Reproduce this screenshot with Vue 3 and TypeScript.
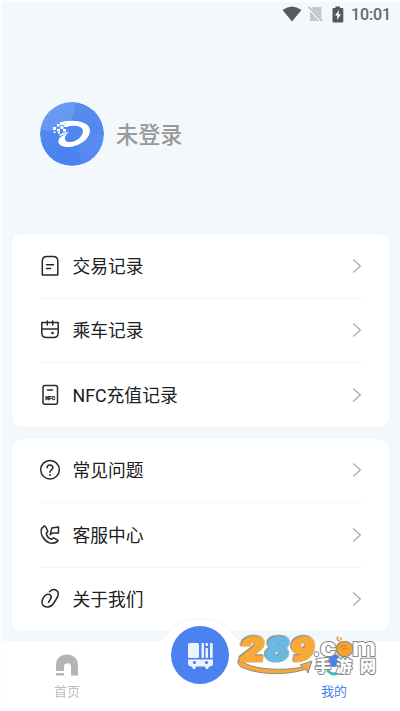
<script setup lang="ts">
interface MenuItem {
  icon: string
  label: string
}

const groups: MenuItem[][] = [
  [
    { icon: 'bill', label: '交易记录' },
    { icon: 'ride', label: '乘车记录' },
    { icon: 'nfc', label: 'NFC充值记录' },
  ],
  [
    { icon: 'help', label: '常见问题' },
    { icon: 'phone', label: '客服中心' },
    { icon: 'about', label: '关于我们' },
  ],
]
</script>

<template>
  <div class="page">
    <header class="status">
      <svg class="wifi" width="20" height="16" viewBox="0 0 20 16"><path d="M.5 4Q10-3 19.500 4L10 15.500Z" fill="#575a5d" /></svg>
      <svg class="sim" width="15" height="16" viewBox="0 0 15 16">
        <path d="M5 1H13.500V15H2V4Z" fill="#c6c9cb" />
        <path d="M0 1L14 15.500" stroke="#f3f8fc" stroke-width="3" />
        <path d="M.5 .8L14.200 15.200" stroke="#a9acae" stroke-width="1.200" />
      </svg>
      <svg class="battery" width="12" height="17" viewBox="0 0 12 17">
        <path d="M3.500 2V.5H8V2H10.500Q11.300 2 11.300 3V15.500Q11.300 16.500 10.500 16.500H1.500Q.5 16.500 .5 15.500V3Q.5 2 1.500 2Z" fill="#55585a" />
        <path d="M7 4L3 9.500H5.500L5 14L9 8.300H6.500Z" fill="#fff" />
      </svg>
      <time>10:01</time>
    </header>

    <section class="profile">
      <svg class="avatar" width="64" height="64" viewBox="0 0 64 64">
        <defs>
          <linearGradient id="avatarFill" x1="0" y1="0" x2="0" y2="1"><stop stop-color="#588eed" /><stop offset="1" stop-color="#4a80f0" /></linearGradient>
          <clipPath id="avatarClip"><circle cx="32" cy="32" r="32" /></clipPath>
        </defs>
        <g clip-path="url(#avatarClip)">
          <circle cx="32" cy="32" r="32" fill="url(#avatarFill)" />
          <circle cx="10" cy="4" r="25" fill="#83adf5" opacity=".42" />
          <circle cx="58" cy="51" r="19" fill="#79a4f6" opacity=".22" />
        </g>
        <path fill="#fff" fill-rule="evenodd" d="M23 19.500C36 17 50 20 50 28.500C50 37 39 45 27.500 45C18.500 45 16.500 39.500 20 35.500L29 29.500C24 34 23.500 39 28 40C35 41 43 35 43 29C43 24 34 23 27 24.500Z" />
        <path d="M19 33Q23 30 29 29.500Q25 32 20 34Z" fill="#fff" />
        <g fill="#fff">
          <rect x="13" y="25" width="3" height="3" /><rect x="17" y="22" width="2.500" height="2.500" /><rect x="20" y="20" width="4" height="3" />
          <rect x="17" y="27" width="3" height="2.500" /><rect x="20.500" y="24" width="3" height="3" /><rect x="24" y="22" width="4" height="3" />
          <rect x="23" y="27" width="3" height="2.500" /><rect x="13.500" y="29.500" width="2" height="1.500" /><rect x="18" y="30" width="2" height="1.500" />
        </g>
      </svg>
      <h1>未登录</h1>
    </section>

    <main>
      <ul v-for="(group, index) in groups" :key="index" class="card">
        <li v-for="item in group" :key="item.label">
          <svg class="glyph" width="22" height="22" viewBox="0 0 22 22">
            <template v-if="item.icon === 'bill'"><path d="M3.300 20V6Q3.300 1.500 8 1.500H14Q18.800 1.500 18.800 6V20Z" /><path d="M7.500 9.700H14.500M7.500 13.500H11.500" /></template>
            <template v-else-if="item.icon === 'ride'"><path d="M2.800 3.500H19.200V14Q19.200 18.500 14.500 18.500H7.500Q2.800 18.500 2.800 14ZM2.800 10H19.200M8.300 2V6M13.700 2V6" /><circle cx="13.500" cy="14" r=".6" class="solid" /></template>
            <template v-else-if="item.icon === 'nfc'"><rect x="4" y="1.500" width="14.500" height="18.800" rx="2" /><path d="M8.500 6H13.500" /><text x="11.200" y="16.200" textLength="10" lengthAdjust="spacingAndGlyphs">NFC</text></template>
            <template v-else-if="item.icon === 'help'"><circle cx="11" cy="10.700" r="9.300" /><path d="M8.100 8.800C8.100 5 13.900 5 13.900 8.600C13.900 11 11 10.800 11 13.200" /><circle cx="11" cy="16" r=".35" class="solid" /></template>
            <template v-else-if="item.icon === 'phone'"><path d="M5.200 2C1.300 4.500 1.400 9 3.800 13C7.500 19 12.800 21.200 18.500 17.500L19 16.400L14.600 13.800L12.300 15.300C10 14.500 7.800 12 7.200 9.500L8.800 7.200L6.400 2.500Z" /><path d="M12.800 3.900L19.500 2.900V9H13.500L11.200 10.700Z" /></template>
            <template v-else><path d="M10.500 3.700Q13 1.200 16 1.700C20.500 3 20 7.500 17 11.500L14.500 15.500C11.500 20 6 20 3.700 17C2 14 3 11.500 5 8.700C7 6 9.500 5.500 11.500 7C13.500 9 11.700 11 9.500 14.300" /></template>
          </svg>
          <span class="label">{{ item.label }}</span>
          <svg class="chevron" width="10" height="16" viewBox="0 0 10 16"><path d="M1.200 1.500L8.300 8L1.200 14.500" /></svg>
        </li>
      </ul>
    </main>

    <nav>
      <a class="tab home">
        <svg width="24" height="22" viewBox="0 0 24 22"><path d="M1 17V11.500C1 4 6 .5 12 .5S23 4 23 11.500V21.500H16V13Q16 9.300 12.500 9.300T9 13V17ZM1 19H9V21.500H1Z" fill="#b5b5b5" /></svg>
        <span>首页</span>
      </a>
      <a class="tab mine">
        <svg width="24" height="22" viewBox="0 0 24 22"><circle cx="12" cy="6.500" r="6.500" fill="#4b80ec" /><path d="M6 17Q12 23 18 17" fill="none" stroke="#39c0ba" stroke-width="3" stroke-linecap="round" /></svg>
        <span>我的</span>
      </a>
      <svg class="hump" width="92" height="24" viewBox="0 0 92 24"><path d="M0 23C16 23 14 1 46 1S76 23 92 23V24H0Z" fill="#fff" /><path d="M0 22.500C16 22.500 14 1 46 1S76 22.500 92 22.500" fill="none" stroke="#edf1f4" stroke-width=".8" /></svg>
      <button class="bus" type="button" aria-label="乘车">
        <svg width="28" height="28" viewBox="0 0 28 28">
          <g fill="#edf3ff"><rect x="2" y="2" width="11" height="15" rx="1.500" /><rect x="15.500" y="2" width="2.500" height="15" rx=".7" /><rect x="19.500" y="7" width="2.500" height="10" rx=".7" /><rect x="19.500" y="2" width="2.500" height="3" rx=".7" /><rect x="24" y="2" width="2.700" height="15" rx=".7" />
            <path d="M2 18.500H27V22Q27 25.500 23.500 25.500H23L22 28H20L19 25.500H10L9 28H7L6 25.500H5.500Q2 25.500 2 22Z" /></g>
          <g fill="#4b80ec"><circle cx="8.500" cy="21.500" r="1.600" /><circle cx="20.500" cy="21.500" r="1.600" /></g>
        </svg>
      </button>
    </nav>

    <svg class="brand" width="144" height="44" viewBox="0 0 144 44">
      <path d="M2 27Q1 31 5 34C25 43 53 42 70 36L72 40L76 28L64 32L67 34C47 38 22 37 8 30Z" fill="#f7aa38" stroke="#8d8b88" />
      <g class="digits">
        <text transform="translate(3 28) skewX(-8)" textLength="24" lengthAdjust="spacingAndGlyphs" class="orange">2</text>
        <text transform="translate(28 28) skewX(-8)" textLength="24" lengthAdjust="spacingAndGlyphs" class="blue">8</text>
        <text transform="translate(53 28) skewX(-8)" textLength="24" lengthAdjust="spacingAndGlyphs" class="orange">9</text>
      </g>
      <g class="domain">
        <text x="77" y="23" textLength="7" lengthAdjust="spacingAndGlyphs">.</text>
        <text x="84" y="23" textLength="16" lengthAdjust="spacingAndGlyphs">c</text>
        <text x="100" y="23" textLength="17" lengthAdjust="spacingAndGlyphs" class="ring">o</text>
        <text x="116" y="23" textLength="24" lengthAdjust="spacingAndGlyphs">m</text>
      </g>
      <circle cx="108.500" cy="16" r="6" fill="#f6a12f" />
      <path d="M104 15.500Q106 11 111 13M106 18Q107 14 111 15.500" fill="none" stroke="#d87e19" stroke-width="1" />
      <path d="M103 8Q100 6 102 4M105 7L105 5" fill="none" stroke="#d8943c" stroke-width="1.500" stroke-linecap="round" />
      <g class="cn"><text x="79" y="38.500">手</text><text x="100" y="38.500">游</text><text x="124" y="38.500">网</text></g>
    </svg>
  </div>
</template>

<style>
body { background: #fff; }
</style>

<style scoped>
* { box-sizing: border-box; }
.page { position: relative; width: 400px; height: 711px; overflow: hidden; display: flex; flex-direction: column; background: #f3f8fc; border-top: 2px solid #fbfdfe; border-left: 2px solid #fbfdfe; font-family: Roboto, "Noto Sans CJK SC", sans-serif; }
.status { height: 28px; flex: none; display: flex; align-items: center; padding: 0 9px 4px 0; justify-content: flex-end; color: #63676a; }
.status time { font-size: 16px; line-height: 20px; font-weight: 500; letter-spacing: -.1px; margin-left: 7px; padding-top: 1px; }
.sim { margin-left: 6px; }
.battery { margin-left: 9px; }
.profile { height: 204px; flex: none; padding: 71.5px 0 0 38px; display: flex; align-items: flex-start; gap: 12px; }
.profile h1 { margin: 17.5px 0 0; font-size: 22.2px; line-height: 32px; font-weight: 500; color: #999; }
main { display: flex; flex-direction: column; gap: 12px; padding: 0 11px 0 10px; }
.card { list-style: none; margin: 0; padding: 0 27px 0 28px; height: 192.5px; display: grid; grid-template-rows: 64.5px 64.5px 1fr; background: #fff; border-radius: 9px; box-shadow: 0 0 1px #dce5eb; }
.card li { display: flex; align-items: center; border-bottom: 1px solid #f5f5f6; }
.card li:last-child { border-bottom: 0; }
.glyph { flex: none; margin-left: -1px; fill: none; stroke: #292929; stroke-width: 1.5; stroke-linecap: round; stroke-linejoin: round; }
.glyph .solid { fill: #292929; }
.glyph text { font: 900 5.5px Roboto, sans-serif; fill: #222; stroke: #222; stroke-width: .25px; text-anchor: middle; }
.label { flex: 1; margin-left: 11.5px; font-size: 17.8px; line-height: 26px; padding-top: 1.5px; color: #202020; }
.chevron { flex: none; fill: none; stroke: #aaa; stroke-width: 1.3; }
nav { position: relative; flex: none; margin: 10px 0 0 -1px; height: 70px; background: #fff; display: flex; justify-content: space-between; padding: 13px 25px 0 25px; }
.tab { width: 82px; display: flex; flex-direction: column; align-items: center; gap: 6px; font-size: 13px; line-height: 20px; color: #bbbfc3; }
.mine { color: #4b80ec; }
.hump { position: absolute; left: 153px; top: -23px; }
.bus { position: absolute; left: 170px; top: -15px; width: 58px; height: 58px; padding: 0; border: 0; border-radius: 50%; background: #4b82ef; display: grid; place-items: center; }
.brand { position: absolute; left: 234px; top: 631px; overflow: visible; }
.digits text { font: 900 33px Roboto, sans-serif; stroke-width: 2.5px; stroke-linejoin: miter; filter: drop-shadow(.6px .5px 0 #8d8b88) drop-shadow(-.6px -.5px 0 #8d8b88); }
.orange { fill: #f8aa38; stroke: #f8aa38; }
.blue { fill: #69b9e2; stroke: #69b9e2; }
.domain text { font: 700 26px Roboto, sans-serif; fill: #fff; stroke: #89898a; stroke-width: 2px; paint-order: stroke; stroke-linejoin: round; }
.domain .ring { fill: #f6a12f; }
.cn text { font: 900 16px "Noto Sans CJK SC", sans-serif; fill: #fff; stroke: #89898a; stroke-width: 2px; paint-order: stroke; stroke-linejoin: round; }
</style>
